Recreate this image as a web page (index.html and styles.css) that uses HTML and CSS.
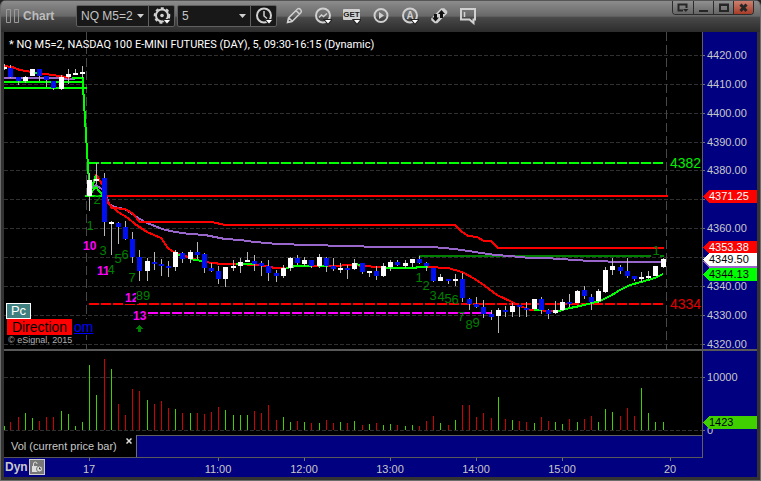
FILE: index.html
```html
<!DOCTYPE html>
<html lang="en">
<head>
<meta charset="utf-8">
<title>Chart</title>
<link rel="stylesheet" href="styles.css">
</head>
<body>
<div class="window">
  <header class="titlebar">
    <svg class="grip" width="14" height="15" viewBox="0 0 14 15" aria-hidden="true"><path d="M.5 .5h4v13h-4zM8.500 .5h4v13h-4z"/></svg>
    <h1 class="title">Chart</h1>
    <div class="field field-symbol">
      <select aria-label="Symbol"><option>NQ M5=2</option></select>
      <svg class="caret" width="7" height="4" viewBox="0 0 7 4" aria-hidden="true"><path d="M0 0h7L3.500 4z"/></svg>
      <button type="button" class="field-button" aria-label="Symbol settings">
        <svg class="icon" width="18" height="18" viewBox="0 0 18 18"><circle cx="9" cy="8.500" r="6" class="ln"/><circle cx="9" cy="8.500" r="7.300" class="cog"/><circle cx="9" cy="8.500" r="1.800" class="fl"/><path d="M11 13h6l-3 3.500z" class="drop"/></svg>
      </button>
    </div>
    <div class="field field-interval">
      <select aria-label="Interval"><option>5</option></select>
      <svg class="caret" width="7" height="4" viewBox="0 0 7 4" aria-hidden="true"><path d="M0 0h7L3.500 4z"/></svg>
      <button type="button" class="field-button" aria-label="Time template">
        <svg class="icon" width="18" height="18" viewBox="0 0 18 18"><circle cx="9" cy="8.500" r="7" class="ln"/><path d="M9 4v5l3 2.500" class="ln thin"/><path d="M11 13h6l-3 3.500z" class="drop"/></svg>
      </button>
    </div>
    <nav class="tools" aria-label="Tools">
      <button type="button" aria-label="Draw"><svg class="icon" width="18" height="18" viewBox="0 0 18 18"><path d="M2.500 15.500l1-4.500 9-9q1.500-1 3 .5t.5 3l-9 9zM4 11l3 3M11 3.500l3.500 3.500" class="ln thin"/><path d="M2 16l1-3 2 2z" class="fl"/></svg></button>
      <button type="button" aria-label="Studies"><svg class="icon" width="18" height="18" viewBox="0 0 18 18"><circle cx="9" cy="8.500" r="7" class="ln"/><path d="M5 10.500l2.500-2.500 2 1.500L13 6.500" class="ln thin"/><path d="M11 13h6l-3 3.500z" class="drop"/></svg></button>
      <button type="button" aria-label="GET"><svg class="icon" width="18" height="18" viewBox="0 0 18 18"><rect x="0" y="2" width="17" height="11" rx="1" class="fl"/><text x="8.500" y="10" class="get">GET</text><path d="M11 13h6l-3 3.500z" class="drop"/></svg></button>
      <button type="button" aria-label="Playback"><svg class="icon" width="18" height="18" viewBox="0 0 18 18"><circle cx="9" cy="8.500" r="6.500" class="ln"/><path d="M7 5l5 3.500L7 12z" class="fl"/></svg></button>
      <button type="button" aria-label="Automation"><svg class="icon" width="18" height="18" viewBox="0 0 18 18"><circle cx="9" cy="8.500" r="7" class="ln"/><text x="9" y="12" class="letter">A</text><path d="M11 13h6l-3 3.500z" class="drop"/></svg></button>
      <button type="button" aria-label="Trade"><svg class="icon" width="18" height="18" viewBox="0 0 18 18"><path d="M2 11.500L11.500 2h2.500l2.500 2.500v1.500L7 15.500H5L2 13z" class="fl ln thin"/><path d="M11.500 3l3.500 4h-2v4h-3V7H8zM5.500 14.500L2 10.500h2v-3.500h3v3.500h2z" class="dark"/></svg></button>
      <button type="button" aria-label="Notes"><svg class="icon" width="18" height="18" viewBox="0 0 18 18"><path d="M2 2h14v10.500h-1.500V16l-4-3.500H2z" class="ln"/><path d="M5.500 5v5" class="ln thin"/></svg></button>
    </nav>
    <div class="window-buttons">
      <button type="button" aria-label="Dock"><svg width="12" height="10" viewBox="0 0 12 10"><path d="M6 7.500H1.500v-6h8V5" class="wl"/><path d="M6 6h5.500L8.800 9z" class="wf"/></svg></button>
      <button type="button" aria-label="Minimize"><svg width="12" height="10" viewBox="0 0 12 10"><path d="M1 7h9v2H1z" class="wf"/></svg></button>
      <button type="button" aria-label="Maximize"><svg width="12" height="10" viewBox="0 0 12 10"><path d="M2 1.500h8v6.500H2zM2 2h8" class="wl"/></svg></button>
      <button type="button" class="close" aria-label="Close"><svg width="12" height="10" viewBox="0 0 12 10"><path d="M2.500 1.500l6 6.500M8.500 1.500l-6 6.500" class="wx"/></svg></button>
    </div>
  </header>

  <main class="workspace">
    <section class="price">
      <svg id="price-plot" class="plot" viewBox="4 32 698 317" preserveAspectRatio="none" role="img" aria-label="Price chart"></svg>
      <p class="caption">* NQ M5=2, NASDAQ 100 E-MINI FUTURES (DAY), 5, 09:30-16:15 (Dynamic)</p>
      <div class="badges">
        <button type="button" class="pc">Pc</button>
        <div class="direction-row"><button type="button" class="direction">Direction</button><a href="#">om</a></div>
        <small>© eSignal, 2015</small>
      </div>
    </section>
    <aside class="scale"><svg id="price-scale" class="plot" viewBox="703 32 54 317" preserveAspectRatio="none"></svg></aside>
    <div class="splitter"></div>
    <section class="volume"><svg id="volume-plot" class="plot" viewBox="4 351 698 84" preserveAspectRatio="none" role="img" aria-label="Volume chart"></svg></section>
    <aside class="scale"><svg id="volume-scale" class="plot" viewBox="703 351 54 84" preserveAspectRatio="none"></svg></aside>
    <div class="tabs">
      <div class="tab"><span>Vol (current price bar)</span><button type="button" aria-label="Close study"><svg width="6" height="6" viewBox="0 0 6 6"><path d="M.5 .5l5 5M5.500 .5l-5 5"/></svg></button></div>
      <div class="tab-rest"></div>
    </div>
    <div class="scale"></div>
    <footer class="times">
      <strong>Dyn</strong>
      <button type="button" class="lock" aria-label="Lock time scale"><svg width="14" height="14" viewBox="0 0 14 14"><path d="M3.500 6V4q0-2 1.800-2T7 4" class="lk"/><path d="M2 6h6v6H2z" class="lf"/><circle cx="9.500" cy="9" r="3" class="lc"/><path d="M9.500 7.500V9H11" class="lh"/></svg></button>
      <svg id="time-scale" class="plot" viewBox="54 458 703 19" preserveAspectRatio="none"></svg>
    </footer>
  </main>
</div>
<script src="chart.js"></script>
</body>
</html>
```
FILE: styles.css
```css
* { box-sizing: border-box; }
body { margin: 0; background: #222; font-family: "Liberation Sans", Arial, sans-serif; font-size: 11px; color: #c8c8c8; }
button { padding: 0; border: 0; background: none; font: inherit; color: inherit; }
svg { display: block; }

.window { display: flex; flex-direction: column; height: 100vh; background: #333; border: solid #6c6c6c; border-width: 0 1px 1px; border-radius: 6px 6px 0 0; overflow: hidden; }

.titlebar { display: flex; flex: 0 0 32px; align-items: center; padding-left: 5px; background: linear-gradient(#555 0 1px, #8c8c8c 1px, #686868 50%, #484848 55%, #2c2c2c); }
.grip { fill: none; stroke: #9a9a9a; }
.title { margin: 0 0 0 3px; width: 53px; font-size: 12px; line-height: 16px; color: #bcbcbc; }
.field { position: relative; display: flex; height: 22px; margin-right: 2px; background: #181818; border: 1px solid #606060; border-radius: 2px; }
.field-symbol { width: 99px; }
.field-interval { width: 100px; }
.field select { flex: 1; min-width: 0; padding: 0 4px; border: 0; background: none; appearance: none; font: 12px "Liberation Sans", Arial, sans-serif; color: #c4c4c4; }
.field-button { display: grid; place-items: center; width: 26px; border-left: 1px solid #606060; }
.caret { position: absolute; right: 30px; top: 8px; fill: #d0d0d0; }
.tools { display: flex; }
.tools button { display: grid; place-items: center; width: 29px; height: 22px; }
.icon .fl { fill: #d0d0d0; }
.icon .ln { fill: none; stroke: #d0d0d0; stroke-width: 2; }
.icon .fl.ln { fill: #d0d0d0; }
.icon .thin { stroke-width: 1.5; }
.icon .dark { fill: #111; }
.icon .cog { fill: none; stroke: #d0d0d0; stroke-width: 2; stroke-dasharray: 3 2.5; }
.icon .drop { fill: #fff; stroke: #222; stroke-width: 2; paint-order: stroke; }
.icon .get { font: bold 8px "Liberation Sans", Arial, sans-serif; text-anchor: middle; fill: #222; }
.icon .letter { font: bold 10px "Liberation Sans", Arial, sans-serif; text-anchor: middle; fill: #d0d0d0; }

.window-buttons { display: flex; align-self: flex-start; margin: 1px 6px 0 auto; border: 1px solid #2c2c2c; border-top: 0; border-radius: 0 0 4px 4px; overflow: hidden; }
.window-buttons button { display: grid; place-items: center; width: 20px; height: 13px; background: linear-gradient(#909090, #666); }
.window-buttons button + button { border-left: 1px solid #2c2c2c; }
.window-buttons .close { background: linear-gradient(#cc8070, #a83c28); }
.wl { fill: none; stroke: #262626; stroke-width: 2; }
.wf { fill: #262626; }
.wx { stroke: #262626; stroke-width: 3; }

.workspace { display: grid; flex: 1; min-height: 0; margin: 0 3px 3px; grid-template-columns: minmax(0, 1fr) 55px; grid-template-rows: minmax(0, 1fr) 2px 84px 23px 19px; background: #000080; }
.plot { width: 100%; height: 100%; }
.price { position: relative; min-height: 0; background: #000; }
.volume { background: #000; }
.scale { min-height: 0; border-left: 1px solid #606060; }
.splitter { grid-column: 1 / -1; background: #585858; }
.caption { position: absolute; left: 5px; top: 6px; margin: 0; font-family: Roboto, sans-serif; line-height: 14px; white-space: nowrap; color: #fff; }
.badges { position: absolute; left: 2px; bottom: 3px; }
.pc { display: block; width: 25px; height: 16px; border: 1px solid #fff; background: #408080; font-size: 13px; line-height: 14px; color: #fff; }
.direction-row { display: flex; font-size: 14px; line-height: 16px; }
.direction { width: 65px; margin: 0 2px 0 1px; background: #f00; color: #000; }
.direction-row a { background: #000; color: #00f; }
.badges small { display: block; margin-left: 2px; font-size: 9px; line-height: 11px; color: #b0b0b0; }

.tabs { display: flex; border-bottom: 1px solid #585858; }
.tab { display: flex; justify-content: space-between; width: 133px; padding: 0 4px 0 7px; background: #000; border-right: 1px solid #707070; line-height: 22px; }
.tab button { height: 12px; }
.tab svg { stroke: #ddd; stroke-width: 1.5; }
.tab-rest { flex: 1; border-top: 1px solid #606060; }
.times { display: flex; grid-column: 1 / -1; min-height: 0; }
.times strong { width: 25px; padding-left: 1px; font-size: 12px; line-height: 18px; }
.lock { width: 16px; height: 16px; margin: 1px 9px 0 0; border: 1px solid #ccc; background: #777; }
.times .plot { flex: 1; min-width: 0; }
.lk, .lh { fill: none; stroke: #ddd; }
.lf { fill: #ddd; }
.lc { fill: #ddd; stroke: #777; }
.lh { stroke: #333; }

.plot rect, .plot path { shape-rendering: crispEdges; }
.grid { stroke: #303030; stroke-dasharray: 4 2; }
.session { stroke: #484848; stroke-dasharray: 9 4; }
.tick { stroke: #707070; }
.line { fill: none; stroke-width: 2; }
.dash { stroke-dasharray: 10 2; }
.lime { stroke: #0f0; }
.red { stroke: #f00; }
.violet { stroke: #9966cc; }
.forest { stroke: #008000; }
.magenta { stroke: #f0f; }
.wick { fill: #b8b8b8; }
.up { fill: #fff; }
.down { fill: #0010f0; }
.vol-up { fill: #40d000; }
.vol-down { fill: #d00000; }
.backing { fill: #000; }
.count { font-size: 13px; text-anchor: middle; fill: #008000; }
.count-hot { font-size: 12px; font-weight: bold; fill: #f0f; }
.arrow { fill: #008000; }
.level { font-size: 14px; }
.level-high { fill: #0e0; }
.level-low { fill: #e00000; }
.axis { font-size: 11px; fill: #c8c8c8; }
.centered { text-anchor: middle; }
.on-dark { fill: #fff; }
.on-light { fill: #000; }
```
FILE: chart.js
```js
const NS = "http://www.w3.org/2000/svg";

function add(parent, tag, attrs, text) {
  const node = document.createElementNS(NS, tag);
  for (const key in attrs) node.setAttribute(key, attrs[key]);
  if (text !== undefined) node.textContent = text;
  parent.appendChild(node);
}

// Bars before the session break, then the session itself: six bars cover 43 units.
const xs = [4, 10, 18, 25, 32, 39, 46, 53, 61, 68, 75, 82];
const steps = [0, 7, 15, 22, 29, 36];
for (let i = 0; i < 81; i++) xs.push(89 + 43 * Math.floor(i / 6) + steps[i % 6]);

// direction, high, body top, body bottom, low
const bars = `
u64,67,69,70 d65,68,77,78 d77,77,81,85 u76,77,81,83 u69,69,76,76 d69,69,76,81 d76,76,80,87 d81,81,88,90 u75,77,89,90 u69,74,77,84 u69,73,75,75 u66,72,74,78
u173,180,196,211 u163,179,181,184 d173,178,222,236 u221,222,224,255 d222,223,227,244 d221,227,239,240
d232,239,257,263 d250,257,271,281 u258,261,271,281 d252,262,264,270 d259,264,266,276 d261,266,268,277
u250,252,267,271 d252,253,259,263 u250,252,259,263 d242,252,255,259 d253,254,268,273 d263,268,271,272
d266,271,279,284 u267,267,279,287 u260,266,268,271 u258,262,266,273 u252,260,262,262 d255,261,264,271
d261,263,266,276 d260,266,273,281 d270,273,276,282 u265,268,276,278 u257,258,268,271 d255,258,263,265
u257,260,264,266 d260,260,266,268 u254,257,266,268 d257,258,266,272 d258,266,269,271 u263,268,270,273
d265,268,270,279 u259,263,269,270 d263,263,272,274 u271,271,273,277 d266,271,276,280 u263,266,276,277
u260,262,267,271 d260,262,265,266 u260,263,266,268 u259,259,263,267 d256,259,263,264 d262,263,266,271
d268,268,281,282 u274,277,281,281 d279,279,281,284 u274,279,281,286 d273,279,298,302 d298,299,304,310
d297,304,307,308 d300,307,314,318 d310,314,317,320 u308,310,316,333 d306,310,312,317 u303,306,312,317
d305,305,307,317 d302,308,310,317 u299,299,309,309 d297,299,310,314 d309,310,314,319 u301,310,313,314
u299,302,310,311 d294,302,304,307 u290,291,303,303 d286,290,296,299 d294,297,302,310 u289,291,301,303
u267,270,292,293 u258,266,270,275 d265,267,271,274 d258,271,276,278 d276,276,279,281 u272,277,279,282
u271,276,278,279 u266,266,276,276 u258,259,267,268`.trim().split(/\s+/);

const volumes = `
g426 r422 r417 g413 g418 r421 r417 r417 g411 g414 g426 g422
g365 g395 r359 g369 r404 r415 r389 r391 g400 r404 r401 r408 g409 r413 g413 r413 r414 r412
r407 g410 g415 g415 g415 r411 r413 r405 r420 g417 g422 r421 g422 r423 g423 r420 r423 g422
r423 g421 r425 g424 r423 g425 g424 r425 g426 g425 r426 r421 r416 g423 r425 g420 r405 r405
r417 r413 r418 g397 r419 g420 r421 r422 g423 r417 r421 g422 g424 r419 g422 r419 r416 g422
g409 g412 r416 r408 r416 g388 g413 g422 g422`.trim().split(/\s+/);

const price = document.getElementById("price-plot");
const gridYs = [55, 84, 113, 142, 170, 199, 228, 257, 286, 315, 344];
for (const y of gridYs) add(price, "path", { class: "grid", d: `M4 ${y + 0.5}H702` });
for (const x of [86.5, 666.5]) add(price, "path", { class: "session", d: `M${x} 32V349` });

// x, baseline, digit
const counts = [
  [97, 204, "2"], [90, 230, "1"], [103, 255, "3"], [118, 263, "5"], [125, 259, "6"], [132, 282, "7"],
  [419, 282, "1"], [426, 290, "2"], [433, 300, "3"], [441, 301, "4"], [448, 303, "5"], [455, 304, "6"],
  [461, 321, "7"], [469, 329, "8"], [476, 327, "9"], [656, 255, "1"]
];

const lines = [
  ["violet", "M4 78H60L68 79H75"],
  ["red", "M4 66L12 67L20 70L32 72L45 74L60 76L70 78"],
  ["lime", "M32 73H38M72 78H83V94L84 95V110L85 112V126L86 128V142L87 144V158L88 160V173L89 175V190M4 82H83M4 88H87M85 196H103"],
  ["lime dash", "M89 163H664"],
  ["red", "M104 196H668"],
  ["red dash", "M89 304H664"],
  ["magenta dash", "M148 313H492"],
  ["forest", "M419 256H651M660 256H664"],
  ["violet", "M90 190L96 185L103 190L110 205L118 208L125 209L135 216L145 222L162 229L175 232L190 234L205 235L225 239L240 240L255 242L278 244L310 245L345 246L382 247H432L455 249L475 252L495 255L510 256L530 258H545L590 261L625 262H664"],
  ["red", "M105 197L112 208L125 209L132 213L140 222H212L225 225H455L461 231L468 236L477 237L484 241H491L498 248H664"],
  ["lime", "M90 193L96 175M90 194L96 187L103 196"],
  ["red", "M96 174L103 186L108 203L118 212L128 218L135 224L147 232L161 238L168 248L175 253L185 256L204 262L222 264H236L257 265L265 266L275 268H285M312 266H318L333 266L352 265L366 266L376 267L386 268M428 267L448 268L462 272L475 279L485 286L497 295L512 302L520 306L530 310L555 311"],
  ["lime", "M178 255H184M190 259L202 261M236 264H255M286 268L296 266H312M318 266H328M354 264L362 265M386 268H413L420 267H428M534 310H541M555 312L570 308L580 306L600 301L612 295L620 290L630 285L641 282L655 278L663 274"]
];
for (const [kind, d] of lines) add(price, "path", { class: "line " + kind, d });

for (const [x, y, digit] of counts) add(price, "text", { class: "count", x, y }, digit);
function hot(x, y, label) {
  add(price, "rect", { class: "backing", x, y: y - 11, width: 14, height: 13 });
  add(price, "text", { class: "count-hot", x, y }, label);
}
hot(83, 250, "10");
hot(97, 275, "11");
hot(125, 302, "12");
hot(133, 320, "13");
add(price, "rect", { class: "backing", x: 108, y: 263, width: 7, height: 12 });
add(price, "text", { class: "count", x: 111, y: 274 }, "4");
add(price, "rect", { class: "backing", x: 136, y: 290, width: 15, height: 12 });
add(price, "text", { class: "count", x: 143, y: 300 }, "89");
add(price, "path", { class: "arrow", d: "M139 325h1l3 4h-2v3h-3v-3h-2z" });
add(price, "text", { class: "level level-high", x: 670, y: 168 }, "4382");
add(price, "text", { class: "level level-low", x: 670, y: 309 }, "4334");

bars.forEach((bar, i) => {
  const [high, top, bottom, low] = bar.slice(1).split(",").map(Number);
  const x = xs[i];
  add(price, "rect", { class: "wick", x, y: high, width: 1, height: low - high });
  add(price, "rect", { class: bar[0] === "u" ? "up" : "down", x: x - 2, y: top, width: 5, height: bottom - top });
});

function tag(scale, y, color, label, tone) {
  add(scale, "path", { d: `M703 ${y + 6.5}L709 ${y}H757V${y + 13}H709Z`, fill: color });
  if (label) add(scale, "text", { class: "axis " + tone, x: 709, y: y + 10 }, label);
}

const scale = document.getElementById("price-scale");
gridYs.forEach((y, i) => {
  add(scale, "path", { class: "tick", d: `M703 ${y + 0.5}h2` });
  if (i !== 5 && i !== 7) add(scale, "text", { class: "axis", x: 707, y: y + 4 }, (4420 - 10 * i) + ".00");
});
tag(scale, 190, "#f00", "4371.25", "on-dark");
tag(scale, 241, "#f00", "4353.38", "on-dark");
tag(scale, 255, "#9966cc");
tag(scale, 253, "#fff", "4349.50", "on-light");
tag(scale, 268, "#0f0", "4344.13", "on-light");

const volume = document.getElementById("volume-plot");
for (const y of [377, 430]) add(volume, "path", { class: "grid", d: `M4 ${y + 0.5}H702` });
volumes.forEach((v, i) => {
  const y = Number(v.slice(1));
  add(volume, "rect", { class: v[0] === "g" ? "vol-up" : "vol-down", x: xs[i], y, width: 1, height: 430 - y });
});

const volumeScale = document.getElementById("volume-scale");
for (const y of [377, 430]) add(volumeScale, "path", { class: "tick", d: `M703 ${y + 0.5}h2` });
add(volumeScale, "text", { class: "axis", x: 707, y: 381 }, "10000");
add(volumeScale, "text", { class: "axis", x: 707, y: 434 }, "0");
tag(volumeScale, 416, "#40d000", "1423", "on-light");

const times = document.getElementById("time-scale");
const hours = [[89, "17"], [218, "11:00"], [304, "12:00"], [390, "13:00"], [476, "14:00"], [562, "15:00"], [670, "20"]];
for (const [x, label] of hours) {
  add(times, "path", { class: "tick", d: `M${x + 0.5} 458v3` });
  add(times, "text", { class: "axis centered", x, y: 473 }, label);
}
```
